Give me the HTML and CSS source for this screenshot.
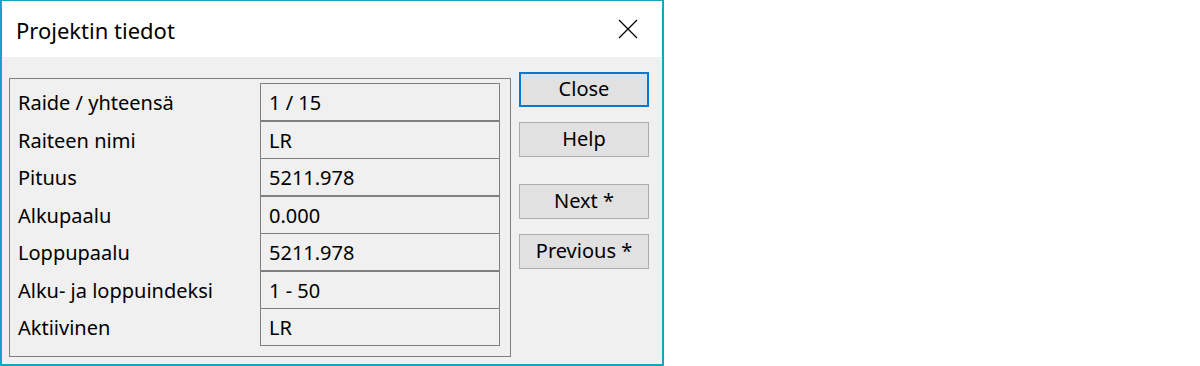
FILE: index.html
```html
<!DOCTYPE html>
<html lang="fi">
<head>
    <meta charset="UTF-8">
    <title>Projektin tiedot</title>
    <link rel="stylesheet" href="styles.css">
</head>
<body>

    <div class="window">
        <div class="title-bar">
            <span class="title">Projektin tiedot</span>
            <svg class="close-icon" width="20" height="20" viewBox="0 0 20 20">
                <path d="M1 1 L19 19 M19 1 L1 19" stroke="#000" stroke-width="1.2" fill="none"/>
            </svg>
        </div>
        <div class="dialog-body">
            <div class="group">
                <div class="row">
                    <div class="label">Raide / yhteensä</div>
                    <div class="value">1 / 15</div>
                </div>
                <div class="row">
                    <div class="label">Raiteen nimi</div>
                    <div class="value">LR</div>
                </div>
                <div class="row joined">
                    <div class="label">Pituus</div>
                    <div class="value">5211.978</div>
                </div>
                <div class="row">
                    <div class="label">Alkupaalu</div>
                    <div class="value">0.000</div>
                </div>
                <div class="row joined">
                    <div class="label">Loppupaalu</div>
                    <div class="value">5211.978</div>
                </div>
                <div class="row">
                    <div class="label">Alku- ja loppuindeksi</div>
                    <div class="value">1 - 50</div>
                </div>
                <div class="row joined">
                    <div class="label">Aktiivinen</div>
                    <div class="value">LR</div>
                </div>
            </div>
            <div class="buttons">
                <button class="btn btn-default">Close</button>
                <button class="btn">Help</button>
                <button class="btn btn-next">Next *</button>
                <button class="btn">Previous *</button>
            </div>
        </div>
    </div>

</body>
</html>
```

FILE: styles.css
```css
body {
    margin: 0;
    background-color: #fff;
    font-family: 'Noto Sans', 'Open Sans', sans-serif;
    font-size: 20px;
    color: #000;
}

.window {
    width: 664px;
    height: 366px;
    box-sizing: border-box;
    border: 2px solid #1ba1c5;
    border-top-width: 1px;
    background-color: #f0f0f0;
}

.title-bar {
    height: 56px;
    background-color: #fff;
    display: flex;
    align-items: center;
    justify-content: space-between;
    padding: 0 24px 0 14px;
}

.title {
    font-size: 22px;
    padding-top: 2px;
}

.close-icon {
    display: block;
}

.dialog-body {
    display: flex;
    align-items: flex-start;
    padding: 15px 0 0 7px;
}

.group {
    width: 502px;
    box-sizing: border-box;
    margin-top: 6px;
    border: 1px solid #808080;
    padding: 4px 0 10px 8px;
}

.row {
    display: flex;
    align-items: center;
}

.row.joined {
    margin-top: -1px;
}

.label {
    width: 242px;
}

.value {
    width: 240px;
    height: 38px;
    box-sizing: border-box;
    border: 1px solid #808080;
    padding-left: 8px;
    display: flex;
    align-items: center;
}

.buttons {
    display: flex;
    flex-direction: column;
    margin-left: 8px;
}

.btn {
    width: 130px;
    height: 35px;
    margin-bottom: 15px;
    font-family: inherit;
    font-size: 20px;
    color: #000;
    background-color: #e1e1e1;
    border: 1px solid #adadad;
    padding: 0 0 2px;
}

.btn-default {
    border: 2px solid #0078d7;
}

.btn-next {
    margin-top: 12px;
}
```
